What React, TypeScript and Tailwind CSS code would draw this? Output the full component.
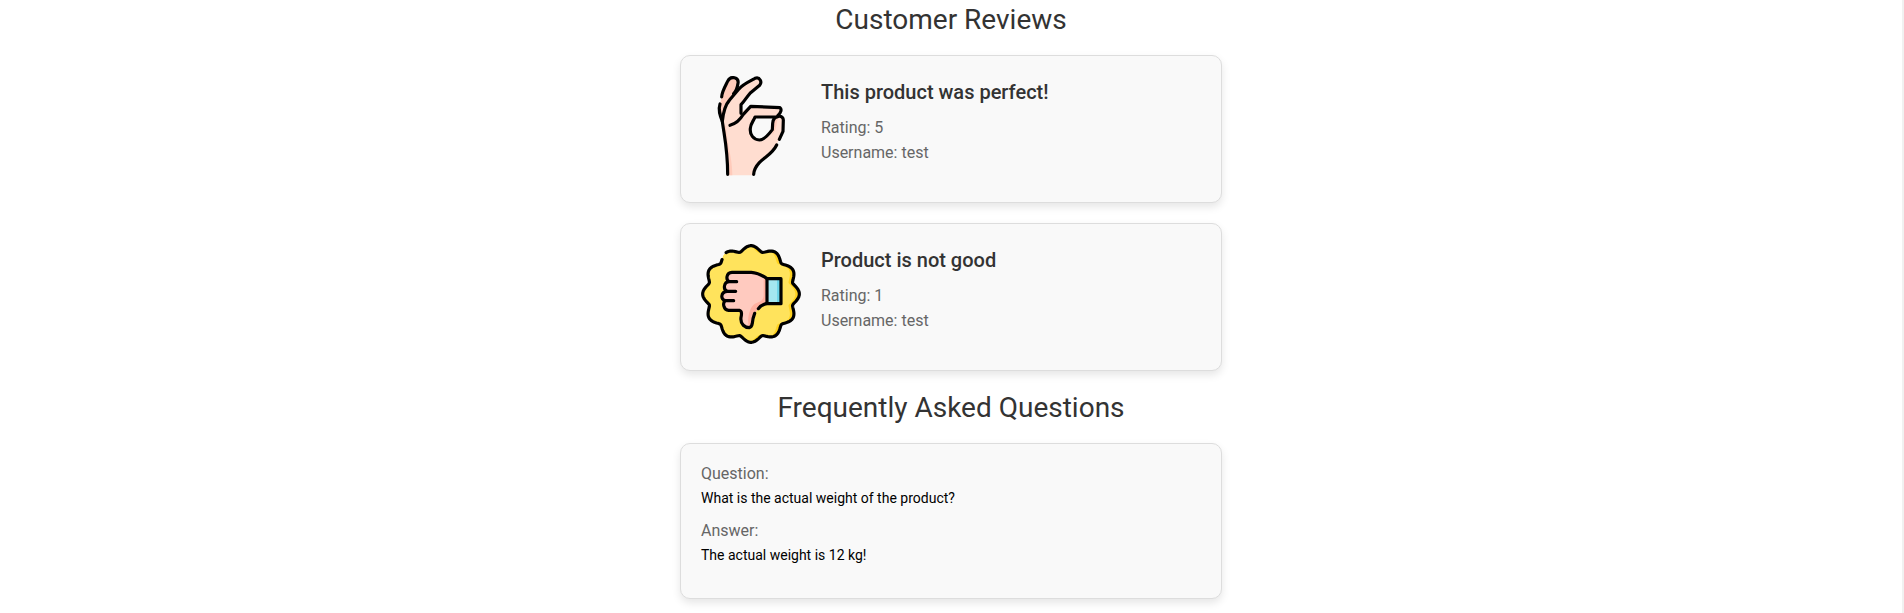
import type { ReactNode } from "react";

const scallop = (from: number, to: number, dx = 0) => {
  const points: string[] = [];
  for (let a = from; a <= to; a += 1.5) {
    const t = (a * Math.PI) / 180;
    const lobe = Math.pow((1 + Math.cos(12 * t)) / 2, 0.7);
    const r = 129 + 16 * lobe;
    points.push(`${(183 + dx + r * Math.sin(t)).toFixed(1)} ${(192 - r * Math.cos(t)).toFixed(1)}`);
  }
  return "M" + points.join("L");
};

function OkHandIcon() {
  return (
    <svg viewBox="33 48 300 300" className="size-25 shrink-0" role="img" aria-label="Positive review">
      <path
        fill="#ffddd0"
        fillRule="evenodd"
        d="M113 346C113 285 107 245 97 185C88 160 87 145 91 128L95 110C95 92 104 82 114 62C121 48 143 50 144 66L146 80L195 54C208 50 217 62 211 74C198 85 164 104 153 134V156L182 139L270 143C276 146 273 158 265 165C275 165 280 172 280 178L279 210L260 254C240 288 195 296 191 346ZM195 171H262C252 177 247 182 248 192L247 208C230 236 218 240 208 240C190 240 179 224 181 205C182 190 190 184 195 171Z"
      />
      <path fill="#ffcbbb" d="M97 185C88 160 87 145 91 128L95 110C95 92 104 82 114 62C121 48 143 50 144 66C145 90 110 115 97 185ZM113 346C113 285 107 245 97 185L108 200C112 260 127 290 127 346ZM248 192C248 178 256 169 265 168C258 190 262 205 247 225Z" />
      <g fill="none" stroke="#000" strokeWidth="9.5" strokeLinecap="round" strokeLinejoin="round">
        <path d="M95 111C96 94 105 80 114 62C122 47 148 51 144 70C142 84 139 93 131 101" />
        <path d="M90 132C84 150 90 166 97 184C103 230 113 268 113 343" />
        <path d="M97 184C100 155 108 132 118 121L146 88C155 75 178 64 195 55C210 50 217 66 209 76L180 100C172 108 164 123 153 134V160" />
        <path d="M120 196C142 190 152 177 160 163L182 139L270 143C276 148 273 158 264 166" />
        <path d="M262 171H195C190 184 182 190 181 205C179 224 190 239 208 240C221 240 233 228 247 209L248 190C249 177 256 170 266 169C275 168 280 173 280 180L279 214L268 238" />
        <path d="M260 255C247 282 225 290 208 308C196 321 192 330 191 343" />
      </g>
    </svg>
  );
}

function ThumbDownIcon() {
  return (
    <svg viewBox="33 42 300 300" className="size-25 shrink-0" role="img" aria-label="Negative review">
      <defs>
        <clipPath id="badge">
          <path d={scallop(0, 360)} />
        </clipPath>
      </defs>
      <path fill="#ffd21f" d={scallop(0, 360)} />
      <path fill="#ffe35c" clipPath="url(#badge)" d={scallop(0, 360, -12)} />
      <path
        fill="#ffcabf"
        d="M231 146C214 134 202 128 184 127H126C108 128 107 150 118 155C100 156 99 180 112 184C90 186 92 210 106 212C97 218 100 240 116 241H148C156 243 156 250 153 262C150 284 166 293 178 293C185 292 186 286 187 280C188 262 192 250 205 236C213 226 221 222 231 220Z"
      />
      <path fill="#ffb0a0" d="M221 140L231 146V220C205 224 192 250 187 280L178 290C171 285 174 240 190 225C202 214 221 218 221 195Z" />
      <path fill="#a4e7f0" d="M231 146H273V221H231Z" />
      <path fill="#6ed5e8" d="M261 146H273V221H261Z" />
      <g fill="none" stroke="#000" strokeWidth="9.5" strokeLinecap="round" strokeLinejoin="round">
        <path d={scallop(-31, 321)} />
        <path d="M231 146H273V221H231Z" />
        <path d="M231 146C214 134 202 128 184 127H126C108 128 107 150 118 155H140M118 155C100 156 99 180 112 184H137M112 184C90 186 92 210 106 212H131M106 212C97 218 100 240 116 241H148C156 243 156 250 153 262C150 284 166 293 178 293C185 292 186 286 187 280C188 268 190 260 194 250" />
        <path d="M205 236C213 226 221 222 231 220" />
      </g>
    </svg>
  );
}

function SectionTitle({ children }: { children: ReactNode }) {
  return <h2 className="pt-5 pb-[18px] text-center text-[28px] leading-[34px] text-[#333]">{children}</h2>;
}

function Card({ children }: { children: ReactNode }) {
  return (
    <article className="flex gap-5 rounded-[10px] border border-[#ddd] bg-[#f9f9f9] p-5 shadow-[0_4px_8px_rgba(0,0,0,0.1)]">
      {children}
    </article>
  );
}

const reviews = [
  { title: "This product was perfect!", rating: 5, username: "test", icon: <OkHandIcon /> },
  { title: "Product is not good", rating: 1, username: "test", icon: <ThumbDownIcon /> },
];

const questions = [
  { question: "What is the actual weight of the product?", answer: "The actual weight is 12 kg!" },
];

export default function App() {
  return (
    <div className="min-h-screen border-r-2 border-[#f1f1f1] bg-white pb-3.5 font-[Roboto,sans-serif]">
      <main className="mx-auto -mt-[17px] max-w-[542px]">
        <section>
          <SectionTitle>Customer Reviews</SectionTitle>
          <div className="flex flex-col gap-5">
            {reviews.map((review) => (
              <Card key={review.title}>
                {review.icon}
                <div className="pb-[17px]">
                  <h3 className="mb-[7px] text-xl leading-8 font-medium text-[#333]">{review.title}</h3>
                  <p className="text-base leading-[25px] text-[#666]">Rating: {review.rating}</p>
                  <p className="text-base leading-[25px] text-[#666]">Username: {review.username}</p>
                </div>
              </Card>
            ))}
          </div>
        </section>
        <section>
          <SectionTitle>Frequently Asked Questions</SectionTitle>
          <div className="flex flex-col gap-5">
            {questions.map((item) => (
              <Card key={item.question}>
                <dl className="pb-[13px]">
                  <dt className="text-base leading-5 text-[#666]">Question:</dt>
                  <dd className="mt-1 mb-[13px] text-sm leading-5 text-black">{item.question}</dd>
                  <dt className="text-base leading-5 text-[#666]">Answer:</dt>
                  <dd className="mt-1 text-sm leading-5 text-black">{item.answer}</dd>
                </dl>
              </Card>
            ))}
          </div>
        </section>
      </main>
    </div>
  );
}
